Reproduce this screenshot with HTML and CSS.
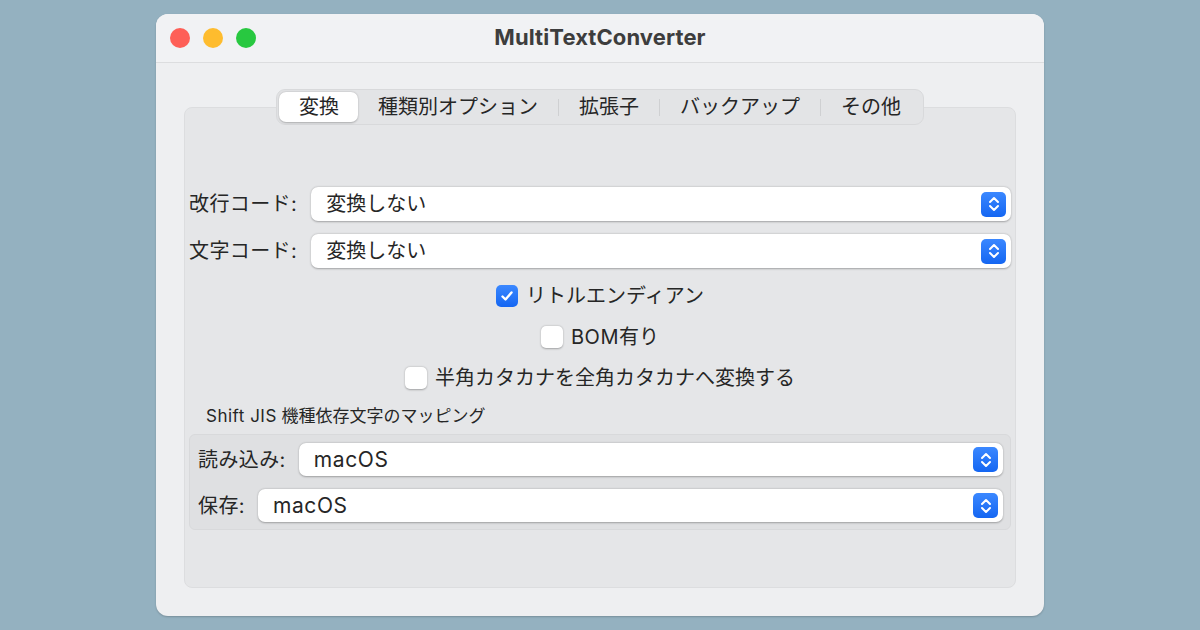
FILE: index.html
```html
<!DOCTYPE html>
<html lang="ja">
<head>
    <meta charset="UTF-8">
    <meta name="viewport" content="width=device-width, initial-scale=1.0">
    <title>MultiTextConverter</title>
    <link rel="stylesheet" href="styles.css">
</head>
<body>
    <div class="window">
        <div class="titlebar">
            <div class="lights">
                <span class="light red"></span>
                <span class="light yellow"></span>
                <span class="light green"></span>
            </div>
            <div class="title">MultiTextConverter</div>
            <div></div>
        </div>

        <div class="content">
            <div class="tabs-wrap">
                <div class="tabs">
                    <div class="tab active">変換</div>
                    <div class="tab">種類別オプション</div>
                    <span class="sep"></span>
                    <div class="tab">拡張子</div>
                    <span class="sep"></span>
                    <div class="tab">バックアップ</div>
                    <span class="sep"></span>
                    <div class="tab">その他</div>
                </div>
            </div>

            <div class="panel">
                <div class="form-row">
                    <label>改行コード:</label>
                    <div class="popup">
                        <span>変換しない</span>
                        <span class="stepper">
                            <svg width="14" height="18" viewBox="0 0 14 18"><path d="M3 7 L7 3 L11 7 M3 11 L7 15 L11 11" fill="none" stroke="#fff" stroke-width="2" stroke-linecap="round" stroke-linejoin="round"/></svg>
                        </span>
                    </div>
                </div>
                <div class="form-row">
                    <label>文字コード:</label>
                    <div class="popup">
                        <span>変換しない</span>
                        <span class="stepper">
                            <svg width="14" height="18" viewBox="0 0 14 18"><path d="M3 7 L7 3 L11 7 M3 11 L7 15 L11 11" fill="none" stroke="#fff" stroke-width="2" stroke-linecap="round" stroke-linejoin="round"/></svg>
                        </span>
                    </div>
                </div>

                <div class="checks">
                    <div class="check-row">
                        <span class="checkbox checked">
                            <svg width="16" height="16" viewBox="0 0 16 16"><path d="M3.5 8.5 L6.5 11.5 L12.5 4.5" fill="none" stroke="#fff" stroke-width="2.4" stroke-linecap="round" stroke-linejoin="round"/></svg>
                        </span>
                        <span>リトルエンディアン</span>
                    </div>
                    <div class="check-row">
                        <span class="checkbox"></span>
                        <span><span class="latin">BOM</span>有り</span>
                    </div>
                    <div class="check-row">
                        <span class="checkbox"></span>
                        <span>半角カタカナを全角カタカナへ変換する</span>
                    </div>
                </div>

                <div class="group-title"><span class="latin">Shift JIS</span> 機種依存文字のマッピング</div>
                <div class="group">
                    <div class="form-row">
                        <label>読み込み:</label>
                        <div class="popup">
                            <span class="latin">macOS</span>
                            <span class="stepper">
                                <svg width="14" height="18" viewBox="0 0 14 18"><path d="M3 7 L7 3 L11 7 M3 11 L7 15 L11 11" fill="none" stroke="#fff" stroke-width="2" stroke-linecap="round" stroke-linejoin="round"/></svg>
                            </span>
                        </div>
                    </div>
                    <div class="form-row">
                        <label>保存:</label>
                        <div class="popup">
                            <span class="latin">macOS</span>
                            <span class="stepper">
                                <svg width="14" height="18" viewBox="0 0 14 18"><path d="M3 7 L7 3 L11 7 M3 11 L7 15 L11 11" fill="none" stroke="#fff" stroke-width="2" stroke-linecap="round" stroke-linejoin="round"/></svg>
                            </span>
                        </div>
                    </div>
                </div>
            </div>
        </div>
    </div>
</body>
</html>
```

FILE: styles.css
```css
* {
    margin: 0;
    padding: 0;
    box-sizing: border-box;
}

body {
    font-family: 'Inter', 'Noto Sans CJK JP', sans-serif;
    background: #94b1c0;
    width: 1200px;
    height: 630px;
    overflow: hidden;
    padding: 14px 0 0 156px;
    color: #262626;
}

.window {
    width: 888px;
    height: 602px;
    background: #eeeff1;
    border-radius: 12px;
    overflow: hidden;
    display: flex;
    flex-direction: column;
    box-shadow: 0 1px 2px rgba(0, 0, 0, 0.2);
}

.titlebar {
    height: 49px;
    background: #f1f2f4;
    border-bottom: 1px solid #dcdddf;
    display: grid;
    grid-template-columns: 1fr auto 1fr;
    align-items: center;
    flex-shrink: 0;
}

.lights {
    display: flex;
    gap: 13px;
    padding-left: 14px;
}

.light {
    width: 20px;
    height: 20px;
    border-radius: 50%;
}

.red { background: #fe5f57; }
.yellow { background: #febc2e; }
.green { background: #28c840; }

.title {
    font-size: 22px;
    font-weight: 700;
    color: #3d3d3d;
    margin-top: -3px;
    letter-spacing: 0.1px;
}

.latin {
    letter-spacing: 0.5px;
}

.content {
    flex: 1;
    display: flex;
    flex-direction: column;
    padding: 26px 28px 28px;
}

.tabs-wrap {
    display: flex;
    justify-content: center;
    margin-bottom: -18px;
    position: relative;
    z-index: 1;
}

.tabs {
    display: flex;
    align-items: center;
    height: 36px;
    padding: 0 2px;
    background: #e3e4e6;
    border: 1px solid #d8d9db;
    border-radius: 9px;
}

.tab {
    height: 30px;
    display: flex;
    align-items: center;
    padding: 0 20px;
    font-size: 20px;
    line-height: 1;
    color: #262626;
}

.tab.active {
    background: #fff;
    border-radius: 7px;
    box-shadow: 0 0.5px 2px rgba(0, 0, 0, 0.25);
    padding: 0 19px 0 20px;
}

.sep {
    width: 1px;
    height: 17px;
    background: #cfd0d2;
}

.panel {
    flex: 1;
    background: #e5e6e8;
    border: 1px solid #dcdddf;
    border-radius: 8px;
    padding: 79px 4px 0;
    display: flex;
    flex-direction: column;
}

.form-row {
    display: flex;
    align-items: center;
    gap: 14px;
    height: 34px;
    margin-bottom: 13px;
}

.form-row label {
    font-size: 20px;
    line-height: 1;
    white-space: nowrap;
    letter-spacing: 0.4px;
}

.popup {
    flex: 1;
    height: 34px;
    background: #fff;
    border-radius: 7px;
    box-shadow: 0 0.5px 2px rgba(0, 0, 0, 0.3);
    display: flex;
    align-items: center;
    justify-content: space-between;
    padding: 0 5px 0 15px;
    font-size: 20px;
    line-height: 1;
}

.popup .latin {
    font-size: 21px;
    letter-spacing: 0.6px;
}

.stepper {
    width: 25px;
    height: 25px;
    border-radius: 5px;
    background: linear-gradient(#3b88ff, #1466f2);
    display: flex;
    align-items: center;
    justify-content: center;
}

.checks {
    margin-top: 1px;
}

.check-row {
    display: flex;
    justify-content: center;
    align-items: center;
    gap: 8px;
    height: 28px;
    margin-bottom: 13px;
    font-size: 20px;
    line-height: 1;
}

.checkbox {
    width: 22px;
    height: 22px;
    border-radius: 5px;
    background: #fff;
    box-shadow: 0 0.5px 2px rgba(0, 0, 0, 0.3);
    display: flex;
    align-items: center;
    justify-content: center;
}

.checkbox.checked {
    background: linear-gradient(#3b88ff, #1466f2);
    box-shadow: none;
}

.group-title {
    font-size: 17px;
    line-height: 22px;
    padding-left: 17px;
    margin-bottom: 7px;
}

.group {
    background: #dfe0e2;
    border: 1px solid #d8d9db;
    border-radius: 6px;
    padding: 8px 7px 7px 8px;
}

.group .form-row {
    height: 33px;
    gap: 13px;
}

.group .form-row:last-child {
    margin-bottom: 0;
}

.group .popup {
    height: 33px;
}
```
